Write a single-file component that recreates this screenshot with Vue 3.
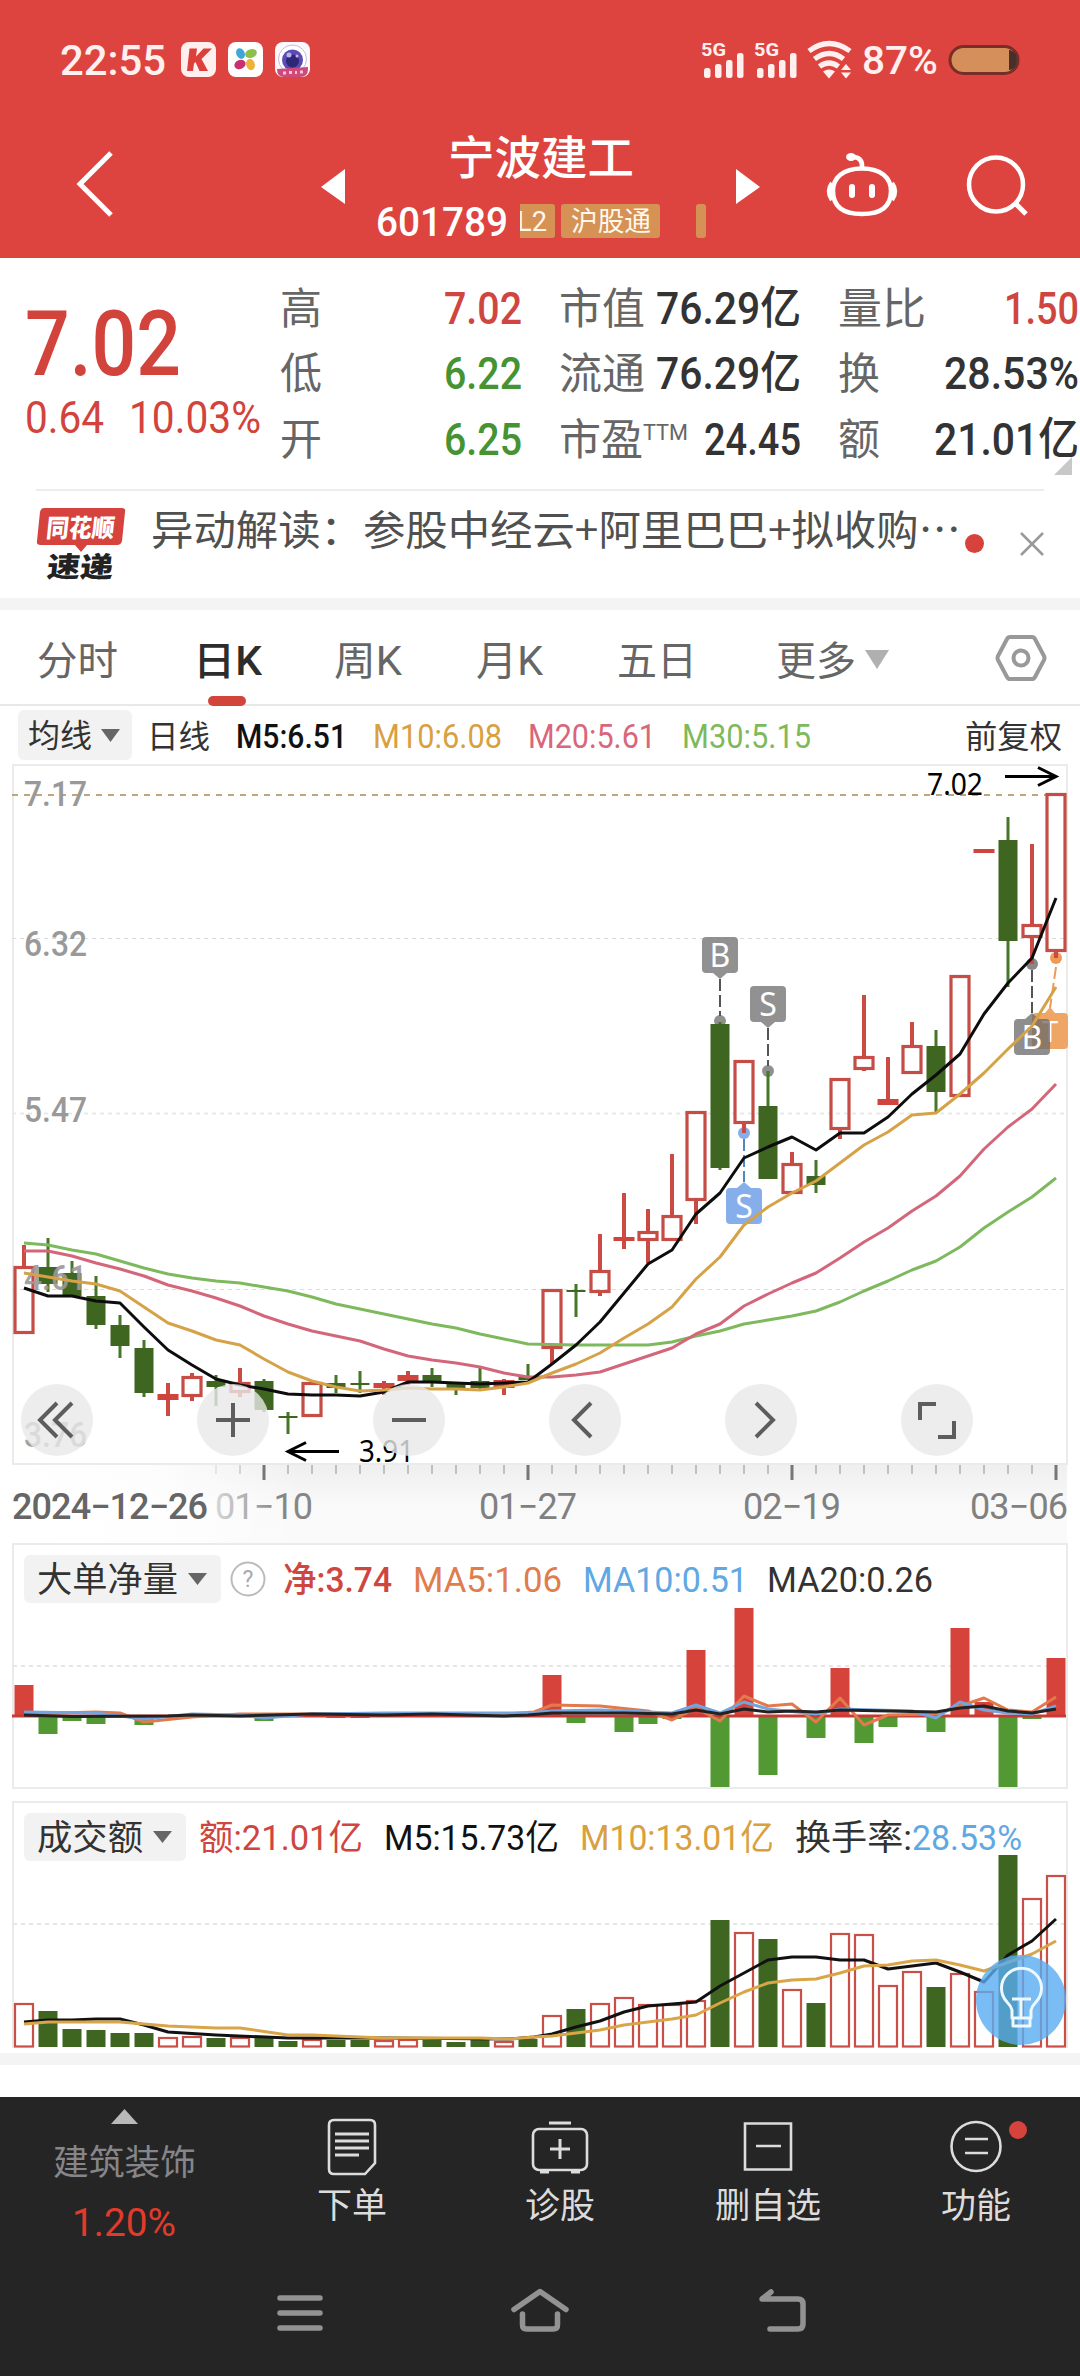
<script setup>
import { h } from 'vue'

// Text fitted to a fixed advance width; the box bottom is the baseline.
const T = (p) => {
  const s = Number(p.s)
  const hh = Math.round(s * 0.72)
  return h('svg', { class: 'fit', width: p.w, height: hh }, [
    h('text', {
      x: 0, y: hh, 'font-size': s, 'font-weight': p.b || 400,
      textLength: p.w, lengthAdjust: 'spacingAndGlyphs', fill: 'currentColor',
    }, p.t),
  ])
}
T.props = ['w', 's', 'b', 't']

const X = (i) => 24 + 24 * i
const line = (ys) => ys.map((y, i) => `${X(i)},${y}`).join(' ')

// [type, high, top, bottom, low]
const candles = [
  ['r', 1245, 1266, 1334, 1334], ['g', 1238, 1267, 1284, 1292], ['g', 1261, 1273, 1296, 1296], ['g', 1276, 1296, 1325, 1329],
  ['g', 1315, 1325, 1346, 1358], ['g', 1340, 1348, 1393, 1397], ['r', 1383, 1394, 1400, 1416], ['r', 1373, 1376, 1397, 1401],
  ['g', 1375, 1381, 1387, 1406], ['r', 1368, 1382, 1393, 1397], ['g', 1379, 1381, 1410, 1412], ['g', 1412, 1416, 1418, 1434],
  ['r', 1382, 1382, 1417, 1417], ['g', 1375, 1383, 1388, 1393], ['g', 1371, 1383, 1385, 1393], ['r', 1381, 1383, 1388, 1395],
  ['r', 1371, 1375, 1381, 1385], ['g', 1368, 1375, 1381, 1387], ['g', 1383, 1383, 1389, 1395], ['g', 1368, 1381, 1388, 1390],
  ['r', 1379, 1380, 1388, 1395], ['g', 1364, 1377, 1380, 1380], ['r', 1289, 1289, 1349, 1364], ['g', 1284, 1290, 1292, 1317],
  ['r', 1234, 1270, 1293, 1296], ['r', 1193, 1237, 1241, 1249], ['r', 1209, 1231, 1241, 1263], ['r', 1154, 1215, 1241, 1241],
  ['r', 1111, 1111, 1201, 1224], ['g', 1022, 1024, 1168, 1170], ['r', 1060, 1060, 1124, 1133], ['g', 1071, 1106, 1179, 1179],
  ['r', 1152, 1163, 1194, 1194], ['g', 1160, 1176, 1185, 1193], ['r', 1078, 1078, 1130, 1139], ['r', 995, 1056, 1070, 1071],
  ['r', 1057, 1099, 1105, 1105], ['r', 1022, 1045, 1074, 1074], ['g', 1030, 1046, 1092, 1112], ['r', 975, 975, 1097, 1097],
  ['r', 849, 849, 853, 853], ['g', 817, 840, 941, 987], ['r', 844, 924, 938, 964], ['r', 793, 793, 952, 958],
].map(([c, hi, t, b, lo], i) => ({ c, hi, t, b, lo, x: X(i) }))

const ma5 = line([1288, 1296, 1296, 1301, 1303, 1327, 1350, 1365, 1379, 1385, 1389, 1394, 1395, 1395, 1396, 1392, 1382, 1382, 1383, 1384, 1383, 1382, 1364, 1345, 1322, 1293, 1264, 1250, 1214, 1193, 1158, 1147, 1137, 1150, 1133, 1133, 1117, 1094, 1075, 1054, 1014, 983, 958, 898])
const ma10 = line([1273, 1277, 1281, 1284, 1291, 1307, 1323, 1331, 1340, 1345, 1359, 1372, 1381, 1387, 1391, 1390, 1388, 1389, 1389, 1390, 1387, 1383, 1373, 1364, 1353, 1338, 1324, 1307, 1279, 1257, 1225, 1207, 1193, 1181, 1163, 1145, 1132, 1115, 1113, 1094, 1073, 1049, 1026, 987])
const ma20 = line([1251, 1251, 1256, 1263, 1269, 1276, 1285, 1291, 1298, 1306, 1316, 1324, 1331, 1336, 1341, 1349, 1356, 1360, 1363, 1367, 1373, 1377, 1377, 1375, 1372, 1364, 1356, 1348, 1334, 1324, 1306, 1294, 1283, 1273, 1258, 1242, 1228, 1211, 1196, 1176, 1149, 1127, 1109, 1084])
const ma30 = line([1243, 1245, 1250, 1254, 1261, 1268, 1274, 1278, 1281, 1283, 1287, 1291, 1297, 1304, 1309, 1314, 1319, 1324, 1328, 1334, 1339, 1344, 1344.5, 1345, 1345, 1345, 1345, 1342, 1336, 1331, 1324, 1320, 1316, 1311, 1302, 1291, 1281, 1270, 1261, 1247, 1228, 1212, 1197, 1178])

const flow = [[0, 1685], [1, 1734], [2, 1721], [3, 1724], [5, 1725], [10, 1721], [13, 1718], [14, 1718], [22, 1675], [23, 1723], [25, 1732], [26, 1724],
  [27, 1719], [28, 1650], [29, 1787], [30, 1608], [31, 1775], [33, 1738], [34, 1668], [35, 1743], [36, 1727], [38, 1732], [39, 1628], [40, 1702], [41, 1787], [42, 1719], [43, 1658]]
  .map(([i, y]) => ({ x: X(i) - 9.5, y: Math.min(y, 1716), h: Math.abs(y - 1716), up: y < 1716 }))

const vol = 'r2004 g2011 g2029 g2030 g2033 g2033 r2038 r2037 g2038 r2038 g2038 g2041 r2040 g2040 g2040 r2041 r2040 g2040 g2042 g2040 r2042 g2039 r2016 g2009 r2004 r1998 r2005 r2005 r2001 g1920 r1933 g1939 r1990 g2003 r1934 r1935 r1986 r1972 g1987 r1974 r1992 g1855 r1899 r1876'
  .split(' ').map((v, i) => ({ c: v[0], y: +v.slice(1), x: X(i) }))

const ticks = Array.from({ length: 36 }, (_, k) => k + 8).map((i) => ({ x: X(i), major: (i - 10) % 11 === 0, o: i < 10 ? 0.35 + (i - 8) * 0.3 : 1 }))
const yLabels = [[806, '7.17'], [956, '6.32'], [1122, '5.47'], [1290, '4.61'], [1447, '3.76']]
const marks = [
  { k: 'S', x: 744, y: 1188, dot: 1133, up: true, c: '#6f9fe6', l: '#4f86bd' },
  { k: 'B', x: 720, y: 937, dot: 1021, up: false, c: '#7c7c7c', l: '#555' },
  { k: 'S', x: 768, y: 986, dot: 1071, up: false, c: '#7c7c7c', l: '#555' },
]
</script>

<template>
  <div class="screen">
    <header class="top">
      <div class="status">
        <T class="clock" t="22:55" w="106" s="43" b="500" />
        <div class="apps">
          <svg width="35" height="35" viewBox="0 0 35 35"><rect width="35" height="35" rx="8" fill="#fff0ef" /><path d="M8.500 6.500h7.500l-1 8L22.500 6.500H31L20.500 17 27 29h-8.500l-4-9-1.500 1.500L12 29H6z" fill="#dd3f3a" /></svg>
          <svg width="35" height="35" viewBox="0 0 35 35"><rect width="35" height="35" rx="8" fill="#fff" /><g><ellipse cx="12.500" cy="11.500" rx="4.200" ry="5.500" transform="rotate(-25 12.500 11.500)" fill="#3fa7d6" /><ellipse cx="23" cy="11.500" rx="6" ry="4.300" transform="rotate(-20 23 11.500)" fill="#8cc04b" /><ellipse cx="12" cy="22.500" rx="5.800" ry="4.500" transform="rotate(-20 12 22.500)" fill="#c9306f" /><ellipse cx="22.500" cy="22.500" rx="4.300" ry="5.800" transform="rotate(-15 22.500 22.500)" fill="#eeb23c" /></g></svg>
          <svg width="35" height="35" viewBox="0 0 35 35"><rect width="35" height="35" rx="8" fill="#fbf9fd" /><circle cx="17.500" cy="17" r="14" fill="#fff" stroke="#c2bcd8" /><circle cx="17.500" cy="18" r="10.500" fill="#5a4cb4" /><circle cx="17.500" cy="19" r="6.500" fill="#2f2675" /><circle cx="14" cy="13" r="2.500" fill="#b8b4ec" /><circle cx="22" cy="14" r="1.500" fill="#e2a8e0" /><path d="M2 27l31-2v2q0 8-8 8H9q-7 0-7-8z" fill="#cf4a7a" /><path d="M8 31h3M14 30.500h3M20 30.500h2M25 30h3" stroke="#f7c5d8" stroke-width="3" /></svg>
        </div>
        <svg class="radio" width="320" height="40" viewBox="700 41 320 40">
          <g fill="#fff0ef">
            <g font-size="18" font-weight="700"><text x="701" y="56" textLength="25" lengthAdjust="spacingAndGlyphs">5G</text><text x="754" y="56" textLength="25" lengthAdjust="spacingAndGlyphs">5G</text></g>
            <g v-for="x in [704, 757]" :key="x">
              <rect :x="x" y="68" width="6.500" height="10" rx="2.500" /><rect :x="x + 11" y="64" width="6.500" height="14" rx="2.500" /><rect :x="x + 22" y="60" width="6.500" height="18" rx="2.500" /><rect :x="x + 33" y="53" width="6.500" height="25" rx="2.500" />
            </g>
            <path d="M823 71.500q6-4 12 0L829 78.500z" /><path d="M846 64l5 6h-10zM846 78.500l5-6h-10z" />
            <text x="862" y="74" font-size="38" font-weight="500" textLength="76" lengthAdjust="spacingAndGlyphs">87%</text>
          </g>
          <path d="M809 51q20-15 41 0M814.500 59q15-11 29 0M819.500 66.500q9.500-7 19 0" fill="none" stroke="#fff0ef" stroke-width="5.200" />
          <rect x="950" y="46.500" width="68" height="27" rx="13.500" fill="#d48f5a" stroke="#7a2c28" stroke-width="3" /><path d="M1009 50h1q7 2 7 10t-7 10h-1z" fill="#47302a" />
        </svg>
      </div>
      <div class="bar">
        <svg class="back" width="40" height="70" viewBox="74 149 40 70"><path d="M111 153L80 184l31 31" fill="none" stroke="#fff" stroke-width="5" /></svg>
        <svg width="25" height="36" viewBox="0 0 25 36"><path d="M24 0v35L0 18z" fill="#fff" /></svg>
        <div class="title">
          <T t="宁波建工" w="186" s="46" b="500" />
          <div class="tags">
            <T class="code" t="601789" w="132" s="41" b="500" />
            <span class="tag cut"><T t="L2" w="30" s="28" /></span>
            <span class="tag"><T t="沪股通" w="80" s="27" /></span>
            <span class="tag sliver"></span>
          </div>
        </div>
        <svg width="25" height="36" viewBox="0 0 25 36"><path d="M0 0v35L24 18z" fill="#fff" /></svg>
        <svg class="bot" width="74" height="68" viewBox="824 151 74 68"><g fill="none" stroke="#fff" stroke-width="4.500"><path d="M861 168.500c-19 0-29 9-29 22.500 0 16 10 23 29 23s29-7 29-23c0-13.500-10-22.500-29-22.500z" /><path d="M831 183q-6 8 0 17M891 183q6 8 0 17" /><path d="M861 168q1-10-8-11" /></g><ellipse cx="850" cy="157" rx="5" ry="4" fill="#fff" /><rect x="848" y="184" width="6" height="14" rx="3" fill="#fff" /><rect x="868" y="184" width="6" height="14" rx="3" fill="#fff" /></svg>
        <svg class="find" width="66" height="66" viewBox="962 153 66 66"><circle cx="995" cy="184.500" r="27" fill="none" stroke="#fff" stroke-width="4.500" /><path d="M1014 203l11 11" stroke="#fff" stroke-width="5" /></svg>
      </div>
    </header>

    <section class="quote">
      <div class="price">
        <T t="7.02" w="156" s="90" b="500" />
        <div class="delta"><T t="0.64" w="79" s="45" b="400" /><T t="10.03%" w="132" s="45" b="400" /></div>
      </div>
      <div class="grid">
        <T class="lab" t="高" w="42" s="43" /><T class="red end" t="7.02" w="78" s="45" b="500" />
        <T class="lab" t="市值" w="86" s="43" /><T class="end" t="76.29亿" w="145" s="45" b="500" />
        <T class="lab" t="量比" w="88" s="43" /><T class="red end" t="1.50" w="75" s="45" b="500" />
        <T class="lab" t="低" w="42" s="43" /><T class="green end" t="6.22" w="78" s="45" b="500" />
        <T class="lab" t="流通" w="86" s="43" /><T class="end" t="76.29亿" w="145" s="45" b="500" />
        <T class="lab" t="换" w="42" s="43" /><T class="end" t="28.53%" w="135" s="45" b="500" />
        <T class="lab" t="开" w="42" s="43" /><T class="green end" t="6.25" w="78" s="45" b="500" />
        <div class="pe"><T class="lab" t="市盈" w="84" s="43" /><T class="lab ttm" t="TTM" w="45" s="22" /></div><T class="end" t="24.45" w="97" s="45" b="500" />
        <T class="lab" t="额" w="42" s="43" /><T class="end" t="21.01亿" w="145" s="45" b="500" />
      </div>
      <svg class="corner" width="18" height="18"><path d="M18 0v18H0z" fill="#c8c8c8" /></svg>
    </section>

    <section class="news">
      <svg width="90" height="76" viewBox="36 506 90 76">
        <path d="M44 508h78q4 0 3 4l-3 29q-1 4-5 4H87l-6 7-6-7H41q-5 0-4-4l3-29q1-4 4-4z" fill="#d6423c" />
        <g font-weight="900" transform="skewX(-6)"><text x="102" y="537" font-size="25" textLength="68" lengthAdjust="spacingAndGlyphs" fill="#fff">同花顺</text><text x="107" y="577" font-size="28" textLength="66" lengthAdjust="spacingAndGlyphs" fill="#222">速递</text></g>
      </svg>
      <T class="headline" t="异动解读：参股中经云+阿里巴巴+拟收购…" w="810" s="41" />
      <i class="dot"></i>
      <svg class="close" width="24" height="24"><path d="M1 1l22 22M23 1L1 23" stroke="#999" stroke-width="2.500" /></svg>
    </section>
    <div class="gap"></div>

    <nav class="tabs">
      <T t="分时" w="81" s="40" /><T class="on" t="日K" w="69" s="40" b="500" /><T t="周K" w="68" s="40" /><T t="月K" w="67" s="40" /><T t="五日" w="80" s="40" />
      <div class="more"><T t="更多" w="80" s="40" /><svg width="24" height="19"><path d="M0 0h24L12 19z" fill="#b0b0b0" /></svg></div>
      <svg class="hex" width="52" height="48" viewBox="994 634 52 48"><path d="M1009 637h22q2 0 3 2l9 17q1 2 0 4l-9 17q-1 2-3 2h-22q-2 0-3-2l-9-17q-1-2 0-4l9-17q1-2 3-2z" fill="none" stroke="#999" stroke-width="4" /><circle cx="1020" cy="658" r="7.500" fill="none" stroke="#999" stroke-width="4" /></svg>
      <i class="mark"></i>
    </nav>

    <div class="legend">
      <div class="pill"><T t="均线" w="64" s="32" /><svg width="19" height="13"><path d="M0 0h19L9.500 13z" fill="#666" /></svg></div>
      <T t="日线" w="63" s="32" />
      <T class="k" t="M5:6.51" w="111" s="32.500" b="500" /><T class="o" t="M10:6.08" w="129" s="32.500" /><T class="p" t="M20:5.61" w="128" s="32.500" /><T class="l" t="M30:5.15" w="129" s="32.500" />
      <T class="adj" t="前复权" w="97" s="32" />
    </div>

    <section class="kline">
      <svg width="1080" height="780" viewBox="0 764 1080 780">
        <defs>
          <linearGradient id="axis" x1="0" y1="0" x2="0" y2="1"><stop offset="0" stop-color="#efefef" /><stop offset=".5" stop-color="#f9f9f9" /><stop offset="1" stop-color="#fafafa" /></linearGradient>
          <linearGradient id="veil" x1="0" y1="0" x2="1" y2="0"><stop offset="0" stop-color="#fff" /><stop offset=".5" stop-color="#fff" stop-opacity=".85" /><stop offset="1" stop-color="#fff" stop-opacity="0" /></linearGradient>
          <linearGradient id="fade" gradientUnits="userSpaceOnUse" x1="214" y1="0" x2="280" y2="0"><stop offset="0" stop-color="#d8d8d8" /><stop offset="1" stop-color="#868686" /></linearGradient>
        </defs>
        <rect x="13" y="1465" width="1054" height="79" fill="url(#axis)" /><rect x="12" y="1465" width="290" height="79" fill="url(#veil)" />
        <rect x="13" y="765" width="1054" height="699" fill="none" stroke="#ebebeb" stroke-width="2" />
        <g stroke="#dcdcdc" stroke-dasharray="4 4"><path d="M12 938.500H1066" /><path d="M12 1113.500H1066" stroke="#e9e9e9" stroke-width="2" /><path d="M12 1289.500H1066" /></g>
        <path d="M12 795H1066" stroke="#bda57c" stroke-width="2" stroke-dasharray="6 6" />

        <g v-for="m in marks" :key="m.x">
          <circle :cx="m.x" :cy="m.dot" r="6" :fill="m.c" opacity=".85" />
          <path :d="m.up ? `M${m.x} 1139V1182` : `M${m.x} ${m.y + 42}V${m.dot - 5}`" :stroke="m.l" stroke-width="2" stroke-dasharray="12 4" />
        </g>
        <circle cx="1032" cy="964" r="6" fill="#888" /><circle cx="1056" cy="958" r="6" fill="#f09a55" />
        <path d="M1032 970V1013" stroke="#555" stroke-width="2" stroke-dasharray="12 4" /><path d="M1056 967L1050 1008" stroke="#ee9a58" stroke-width="2" stroke-dasharray="12 4" />
        <path d="M1036 1013h9l5-6 5 6h9q4 0 4 4v28q0 4-4 4h-28q-4 0-4-4v-28q0-4 4-4z" fill="#efa565" />
        <text class="mk" x="1042" y="1042" font-size="29" fill="#fff">T</text>

        <g v-for="c in candles" :key="c.x">
          <template v-if="c.c === 'g'"><rect :x="c.x - 1.500" :y="c.hi" width="3" :height="c.lo - c.hi" fill="#467628" /><rect :x="c.x - 9.500" :y="c.t" width="19" :height="c.b - c.t" fill="#3f6621" /></template>
          <template v-else>
            <rect :x="c.x - 2" :y="c.hi" width="4" :height="c.t - c.hi" fill="#cb4a43" /><rect :x="c.x - 2" :y="c.b" width="4" :height="c.lo - c.b" fill="#cb4a43" />
            <rect v-if="c.b - c.t < 9" :x="c.x - 10.500" :y="c.t" width="21" :height="c.b - c.t" fill="#cf443c" /><rect v-else :x="c.x - 9" :y="c.t + 1.500" width="18" :height="c.b - c.t - 3" fill="none" stroke="#c54d46" stroke-width="3.200" />
          </template>
        </g>
        <g font-size="35" font-weight="500" fill="#999"><text v-for="[y, t] in yLabels" :key="t" x="24" :y="y" textLength="63" lengthAdjust="spacingAndGlyphs" :opacity="y > 1200 ? .9 : 1">{{ t }}</text></g>

        <g v-for="m in marks" :key="m.x">
          <rect :x="m.x - 18" :y="m.y" width="36" height="36" rx="4" :fill="m.c" opacity=".84" />
          <path :d="m.up ? `M${m.x - 7} ${m.y}l7-6 7 6z` : `M${m.x - 7} ${m.y + 36}l7 6 7-6z`" :fill="m.c" opacity=".84" />
          <text class="mk" :x="m.x" :y="m.y + 30" font-size="32" text-anchor="middle" fill="#fff">{{ m.k }}</text>
        </g>
        <path d="M1018 1019h7l7-6 7 6h7q4 0 4 4v28q0 4-4 4h-28q-4 0-4-4v-28q0-4 4-4z" fill="#6b6b6b" opacity=".76" /><text class="mk" x="1032" y="1049" font-size="32" text-anchor="middle" fill="#fff">B</text>

        <g fill="none" stroke-width="3" stroke-linejoin="round"><polyline :points="ma30" stroke="#7eb95e" /><polyline :points="ma20" stroke="#d4667a" /><polyline :points="ma5" stroke="#0d0d0d" /><polyline :points="ma10" stroke="#d6a248" /></g>

        <g class="mk" font-size="30" fill="#000"><text x="927" y="795" textLength="56" lengthAdjust="spacingAndGlyphs">7.02</text><text x="359" y="1462" textLength="55" lengthAdjust="spacingAndGlyphs">3.91</text></g>
        <path d="M1005 776.500h50M1038 767.500l18 9-18 9M339 1451.500h-50M306 1442.500l-18 9 18 9" fill="none" stroke="#000" stroke-width="3" />

        <rect v-for="t in ticks" :key="t.x" :x="t.major ? t.x - 1.500 : t.x - .5" y="1465" :width="t.major ? 3 : 1" :height="t.major ? 15 : 9" :fill="t.major ? '#777' : '#909090'" :opacity="t.o" />
        <g font-size="36" fill="#808080">
          <text x="12" y="1519" textLength="196" lengthAdjust="spacing" font-weight="500" fill="#666">2024−12−26</text><text x="215" y="1519" textLength="98" lengthAdjust="spacing" fill="url(#fade)">01−10</text>
          <text x="479" y="1519" textLength="98" lengthAdjust="spacing">01−27</text><text x="743" y="1519" textLength="98" lengthAdjust="spacing">02−19</text><text x="970" y="1519" textLength="98" lengthAdjust="spacing">03−06</text>
        </g>
      </svg>
      <div class="tools">
        <svg width="72" height="72" viewBox="0 0 72 72"><path d="M36 19L19 36l17 17M51 19L34 36l17 17" /></svg>
        <svg width="72" height="72" viewBox="0 0 72 72"><path d="M19 36h34M36 19v34" /></svg>
        <svg width="72" height="72" viewBox="0 0 72 72"><path d="M19 36h34" /></svg>
        <svg width="72" height="72" viewBox="0 0 72 72"><path d="M42 19L25 36l17 17" /></svg>
        <svg width="72" height="72" viewBox="0 0 72 72"><path d="M31 19l17 17-17 17" /></svg>
        <svg width="72" height="72" viewBox="0 0 72 72"><path d="M19 36V20h16M53 37v16H37" /></svg>
      </div>
    </section>

    <section class="panel flow">
      <svg class="plot" width="1080" height="246" viewBox="0 1543 1080 246">
        <rect x="13" y="1544" width="1054" height="244" fill="#fff" stroke="#ebebeb" stroke-width="2" />
        <path d="M13 1666H1066" stroke="#e6e6e6" stroke-width="2" stroke-dasharray="4 4" />
        <rect v-for="b in flow" :key="b.x" :x="b.x" :y="b.y" width="19" :height="b.h" :fill="b.up ? '#d5433b' : '#529933'" />
        <path d="M12 1716H1066" stroke="#c83a36" stroke-width="3" />
        <g fill="none" stroke-width="3" stroke-linejoin="round">
          <polyline stroke="#e27a4b" points="24,1714 96,1712 120,1713 144,1722 192,1717 240,1714 504,1714 534,1712 552,1705 600,1706 648,1711 672,1720 696,1708 720,1721 744,1696 768,1706 792,1704 816,1722 840,1698 864,1725 888,1715 936,1714 960,1706 984,1698 1008,1710 1032,1712 1056,1697" />
          <polyline stroke="#74a3dd" points="24,1712 96,1713 144,1719 192,1714 240,1715 264,1718 312,1714 384,1713 528,1713 552,1711 600,1710 648,1712 672,1713 696,1705 720,1713 744,1702 768,1709 816,1714 840,1709 912,1711 936,1718 960,1702 984,1710 1008,1713 1032,1714 1056,1706" />
          <polyline stroke="#222" points="24,1715 72,1716.500 168,1716 192,1715 240,1716 312,1714 384,1715 432,1714 504,1716 528,1715 552,1713 624,1713 672,1714 696,1710 720,1714 744,1709 768,1712 792,1711 816,1712 840,1710 888,1711 936,1712 960,1708 984,1706 1008,1711 1032,1713 1056,1709" />
        </g>
      </svg>
      <div class="head">
        <div class="pill"><T t="大单净量" w="141" s="35" /><svg width="19" height="12"><path d="M0 0h19L9.500 12z" fill="#666" /></svg></div>
        <svg class="q" width="38" height="38"><circle cx="19" cy="19" r="16.500" fill="none" stroke="#bbb" stroke-width="2" /><text x="19" y="27" font-size="23" text-anchor="middle" fill="#aaa">?</text></svg>
        <T class="red" t="净:3.74" w="109" s="35" b="500" /><T class="or" t="MA5:1.06" w="149" s="35" /><T class="bl" t="MA10:0.51" w="165" s="35" /><T t="MA20:0.26" w="166" s="35" />
      </div>
    </section>

    <section class="panel amount">
      <svg class="plot" width="1080" height="252" viewBox="0 1801 1080 252">
        <path d="M13 2048V1802H1067V2048" fill="none" stroke="#ebebeb" stroke-width="2" />
        <path d="M13 1924H1066" stroke="#e6e6e6" stroke-width="2" stroke-dasharray="4 4" />
        <template v-for="v in vol" :key="v.x"><rect v-if="v.c === 'g'" :x="v.x - 9.500" :y="v.y" width="19" :height="2047 - v.y" fill="#3f6621" /><rect v-else :x="v.x - 9" :y="v.y" width="18" :height="2046.500 - v.y" fill="none" stroke="#c94f48" stroke-width="2.200" /></template>
        <g fill="none" stroke-width="3" stroke-linejoin="round">
          <polyline stroke="#111" points="24,2022 48,2020 72,2020 96,2019 120,2019 144,2025 168,2032 216,2035 288,2038 384,2038 510,2039 534,2037 552,2034 576,2027 600,2021 624,2012 648,2006 672,2004 696,2002 720,1986 744,1973 768,1960 792,1957 816,1957 840,1960 864,1960 888,1969 912,1966 936,1963 960,1972 984,1982 1008,1955 1032,1941 1056,1919" />
          <polyline stroke="#d9a548" points="24,2024 48,2022 120,2022 144,2024 168,2026 216,2028 240,2028 288,2035 312,2035 384,2038 480,2038 510,2039 534,2037 552,2036 576,2033 600,2030 624,2025 648,2022 672,2019 696,2015 720,2003 744,1992 768,1983 792,1980 816,1979 840,1973 864,1966 888,1965 912,1961 936,1960 960,1965 984,1971 1032,1954 1056,1941" />
        </g>
        <circle cx="1021" cy="2000" r="45" fill="#59adf3" opacity=".8" />
        <path d="M1012 2018v-8q-1-4-5-8a20 20 0 1 1 29 0q-4 4-5 8v8zM1021 2018v-19M1012 1999h19M1013 2018v8h17v-8" fill="none" stroke="#eef8ff" stroke-width="3" stroke-linejoin="round" />
      </svg>
      <div class="head">
        <div class="pill"><T t="成交额" w="106" s="35" /><svg width="19" height="12"><path d="M0 0h19L9.500 12z" fill="#666" /></svg></div>
        <T class="red" t="额:21.01亿" w="164" s="35" /><T class="k" t="M5:15.73亿" w="175" s="35" /><T class="o" t="M10:13.01亿" w="194" s="35" />
        <div class="turn"><T t="换手率:" w="117" s="35" /><T class="bl" t="28.53%" w="110" s="35" /></div>
      </div>
    </section>
    <div class="gap"></div>

    <footer>
      <div class="actions">
        <div class="act sector"><svg width="27" height="15"><path d="M13.500 0L27 15H0z" fill="#b9b9b9" /></svg><T t="建筑装饰" w="143" s="35.500" /><T class="pct" t="1.20%" w="104" s="38" /></div>
        <div class="act"><svg width="64" height="60" viewBox="0 0 64 60"><path d="M14 3h36q5 0 5 5v38l-10 11H14q-5 0-5-5V8q0-5 5-5z" /><path d="M15 17h34M15 24h34M15 31h34M15 38h24" stroke-width="3" /></svg><T t="下单" w="70" s="35" /></div>
        <div class="act"><svg width="64" height="60" viewBox="0 0 64 60"><rect x="5" y="12" width="54" height="41" rx="6" /><path d="M21 6h22M12 55h9M43 55h9M32 22v20M22 32h20" stroke-width="3" /></svg><T t="诊股" w="70" s="35" /></div>
        <div class="act"><svg width="64" height="60" viewBox="0 0 64 60"><path d="M9 6.500h46v46H9zM20 29h25" /></svg><T t="删自选" w="106" s="35" /></div>
        <div class="act"><svg width="64" height="60" viewBox="0 0 64 60"><circle cx="32" cy="29.500" r="24.500" /><path d="M21 22h23M21 36h23" /></svg><T t="功能" w="70" s="35" /><i class="badge"></i></div>
      </div>
      <div class="keys">
        <svg width="46" height="44" viewBox="277 2288 46 44"><path d="M280 2298h40M280 2313h40M280 2328h40" /></svg>
        <svg width="58" height="44" viewBox="511 2288 58 44"><path d="M514 2309.500l26-18 26 18M522.500 2314v11q0 4 4 4h27q4 0 4-4v-11" /></svg>
        <svg width="50" height="46" viewBox="755 2287 50 46"><path d="M768 2328h28q5 0 5-5v-20q0-5-5-5h-36l9-7" /></svg>
      </div>
    </footer>
  </div>
</template>

<style>
body { margin: 0; background: #fff; }
svg { display: block; flex: none; overflow: visible; }
.fit { white-space: pre; }
</style>

<style scoped>
.screen { width: 1080px; height: 2376px; overflow: hidden; background: #fff; color: #333; font-family: Roboto, "Noto Sans CJK SC", sans-serif; }
.top { height: 258px; background: #de443f; color: #fff; }
.status { display: flex; height: 84px; align-items: flex-end; padding: 0 60px 0 60px; box-sizing: border-box; }
.clock { margin-bottom: 9px; color: #fff0ef; }
.apps { display: flex; gap: 12px; margin: 0 auto 7px 15px; }
.radio { margin-bottom: 3px; }
.bar { display: flex; align-items: flex-start; height: 174px; }
.bar > svg { margin-top: 85px; }
.bar > .back { margin: 65px 207px 0 74px; }
.title { display: flex; flex-direction: column; align-items: center; width: 330px; margin: 57px 30px 0; }
.tags { display: flex; align-items: flex-start; align-self: flex-start; margin-top: 30px; }
.code { margin: 2px 12px 0 0; }
.tag { display: flex; align-items: center; justify-content: center; width: 99px; height: 34px; background: #d69155; border-radius: 3px; color: #fff8ec; }
.cut { justify-content: flex-end; width: 35px; margin-right: 6px; padding-right: 8px; overflow: hidden; border-radius: 0 3px 3px 0; box-sizing: border-box; }
.sliver { width: 10px; margin-left: 36px; }
.bar > .bot { margin: 67px 0 0 64px; }
.bar > .find { margin: 69px 0 0 64px; }
.quote { position: relative; display: flex; height: 231px; margin: 0 36px; border-bottom: 2px solid #ededed; }
.price { flex: none; width: 245px; margin-left: -11px; padding-top: 52px; color: #d2433c; }
.delta { display: flex; gap: 25px; margin-top: 26px; }
.grid { display: grid; flex: none; grid-template-columns: 122px 120px 94px 147px 97px 143px; grid-template-rows: 65.500px 65.500px 65.500px; column-gap: 0; align-items: end; width: 800px; height: 197px; margin-left: 10px; }
.grid > :nth-child(6n + 3), .grid > .pe { margin-left: 37px; }
.grid > :nth-child(6n + 4) { margin-right: -38px; }
.grid > :nth-child(6n + 5) { margin-left: 75px; }
.grid > :nth-child(6n) { margin-right: -76px; }
.end { justify-self: end; }
.pe { display: flex; }
.ttm { color: #777; }
.lab { color: #666; }
.red { color: #cf4640; }
.green { color: #459333; }
.corner { position: absolute; right: -28px; top: 199px; }
.news { display: flex; height: 107px; padding: 15px 0 0 36px; box-sizing: border-box; color: #505050; }
.headline { margin: 9px 0 0 25px; font-family: "Noto Sans CJK SC", sans-serif; }
.dot { flex: none; width: 19px; height: 19px; margin: 28px 0 0 4px; border-radius: 50%; background: #d6423c; }
.close { margin: 26px 0 0 36px; }
.gap { height: 12px; background: #f4f4f4; }
.tabs { position: relative; display: grid; grid-template-columns: 156px 141px 142px 141px 159px 219px 52px; height: 96px; padding: 36px 0 0 37px; box-sizing: border-box; border-bottom: 2px solid #e8e8e8; color: #666; }
.on { color: #2d2d2d; }
.mark { position: absolute; left: 208px; bottom: -2px; width: 38px; height: 10px; border-radius: 5px; background: #d2453d; }
.more { display: flex; gap: 9px; }
.more > svg:last-child { margin-top: 4px; }
.hex { margin-top: -12px; }
.legend { display: flex; align-items: flex-start; gap: 26px; height: 58px; padding: 19px 18px 0; box-sizing: border-box; }
.pill { display: flex; align-items: center; justify-content: space-between; background: #f2f2f2; border-radius: 6px; box-sizing: border-box; }
.legend .pill { width: 114px; height: 50px; margin: -15px -11px 0 0; padding: 0 12px 0 10px; }
.adj { margin-left: auto; }
.k { color: #111; }
.o { color: #d9a03f; }
.p { color: #d9667a; }
.l { color: #7eba5b; }
.or { color: #e17c4d; }
.bl { color: #5fa8e4; }
.mk { font-family: "Noto Sans", sans-serif; }
.kline { position: relative; height: 779px; }
.tools { position: absolute; left: 21px; top: 620px; display: flex; gap: 104px; }
.tools svg { border-radius: 50%; background: rgba(233, 233, 233, .8); fill: none; stroke: #5d5d5d; stroke-width: 4; }
.panel { position: relative; }
.plot { position: absolute; left: 0; top: 0; }
.flow { height: 258px; }
.amount { height: 252px; }
.head { position: relative; display: flex; align-items: flex-start; padding-left: 24px; }
.head > .fit, .head > .turn { margin: 24px 0 0 21px; }
.head > .pill { height: 48px; margin-top: 12px; padding: 0 14px 0 13px; }
.flow .pill { width: 197px; }
.flow .head > .fit:last-child { margin-left: 19px; }
.amount .pill { width: 162px; margin-right: -8px; }
.q { margin: 17px -5px 0 8px; }
.turn { display: flex; }
footer { height: 311px; margin-top: 32px; background: #252525; color: #dcdcdc; }
.actions { display: grid; grid-template-columns: 248px 208px 207px 209px 208px; height: 160px; }
.act { position: relative; display: flex; flex-direction: column; align-items: center; padding-top: 20px; }
.act > svg:first-child { fill: none; stroke: #dcdcdc; stroke-width: 2.600; margin-bottom: 16px; }
.sector { padding-top: 12px; color: #85858a; }
.sector > svg:first-child { stroke: none; margin-bottom: 25px; }
.pct { margin-top: 34px; color: #e23b2b; }
.badge { position: absolute; left: 137px; top: 24px; width: 18px; height: 18px; border-radius: 50%; background: #d6423c; }
.keys { display: flex; padding: 31px 0 0 277px; }
.keys svg { fill: none; stroke: #929292; stroke-width: 5.500; stroke-linecap: round; stroke-linejoin: round; }
.keys svg + svg { margin-left: 188px; }
</style>
